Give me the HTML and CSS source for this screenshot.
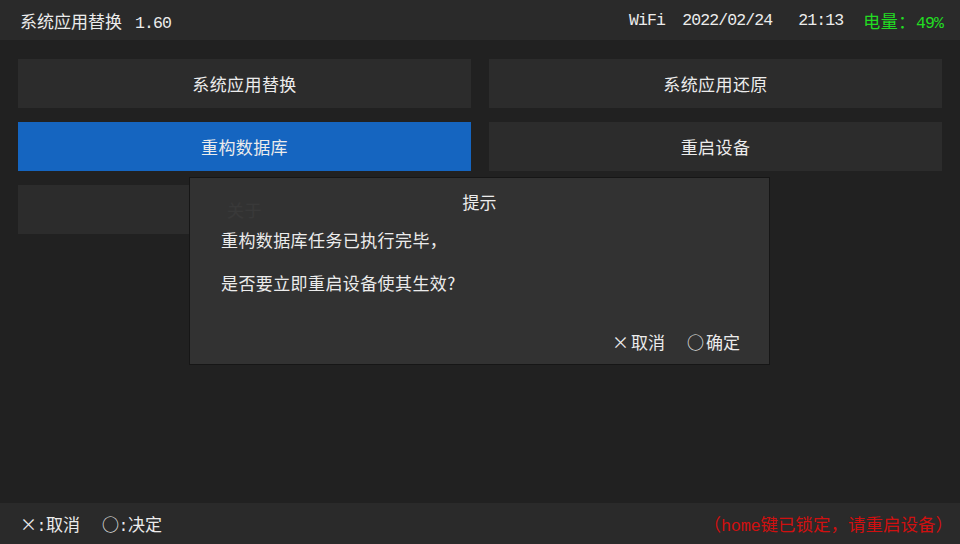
FILE: index.html
```html
<!DOCTYPE HTML>
<html>

<head>
    <meta charset="utf-8">
    <title>系统应用替换</title>
    <link rel="stylesheet" href="styles.css">
</head>

<body>
    <div class="screen">
        <div class="topbar">
            <span class="app-title">系统应用替换<span class="mono"> 1.60</span></span>
            <div class="status">
                <span class="mono wifi">WiFi</span>
                <span class="mono">2022/02/24</span>
                <span class="mono time">21:13</span>
                <span class="battery">电量：<span class="mono">49%</span></span>
            </div>
        </div>

        <div class="content">
            <div class="menu">
                <div class="item">系统应用替换</div>
                <div class="item">系统应用还原</div>
                <div class="item active">重构数据库</div>
                <div class="item">重启设备</div>
                <div class="item">关于</div>
            </div>

            <div class="dialog">
                <div class="dialog-title">提示</div>
                <div class="dialog-body">
                    <p>重构数据库任务已执行完毕，</p>
                    <p>是否要立即重启设备使其生效?</p>
                </div>
                <div class="dialog-actions">
                    <span><i class="key">×</i>取消</span>
                    <span><i class="key">○</i>确定</span>
                </div>
            </div>
        </div>

        <div class="bottombar">
            <div class="hints">
                <span><i class="key">×</i><span class="mono">:</span>取消</span>
                <span><i class="key">○</i><span class="mono">:</span>决定</span>
            </div>
            <span class="warn">（<span class="mono">home</span>键已锁定，请重启设备）</span>
        </div>
    </div>
</body>

</html>
```

FILE: styles.css
```css
html,
body {
    background: #212121;
    padding: 0;
    border: 0;
    margin: 0;
    height: 100%;
}

body {
    font-family: "Noto Sans CJK SC", "Noto Sans", sans-serif;
    color: #ececec;
    font-size: 17px;
}

.screen {
    width: 960px;
    height: 544px;
    display: flex;
    flex-direction: column;
    overflow: hidden;
}

/* 半角字符: 窄而高 */
.mono {
    font-family: "Liberation Mono", monospace;
    font-size: 16.5px;
    letter-spacing: -0.9px;
}

.key {
    font-style: normal;
    display: inline-block;
    width: 16px;
    text-align: center;
}

/* 顶部状态栏 */
.topbar {
    height: 40px;
    background: #2a2a2a;
    display: flex;
    align-items: center;
    justify-content: space-between;
    padding: 0 17px 0 20px;
    flex-shrink: 0;
}

.app-title {
    font-size: 17px;
}

.app-title .mono {
    margin-left: 4px;
}

.status {
    display: flex;
    align-items: center;
    gap: 20px;
}

.status .wifi {
    margin-right: -3px;
}

.status .time {
    margin-left: 6px;
}

.battery {
    color: #22dd22;
    letter-spacing: 0.6px;
}

/* 菜单 */
.content {
    flex: 1;
    position: relative;
    padding: 19px 18px 0 18px;
}

.menu {
    display: grid;
    grid-template-columns: 1fr 1fr;
    grid-auto-rows: 49px;
    gap: 14px 18px;
}

.item {
    background: #2c2c2c;
    display: flex;
    align-items: center;
    justify-content: center;
    letter-spacing: 0.4px;
}

.item.active {
    background: #1565c0;
}

/* 弹窗 */
.dialog {
    position: absolute;
    left: 189px;
    top: 137px;
    width: 579px;
    height: 186px;
    background: rgba(51, 51, 51, 0.97);
    border: 1px solid #161616;
    display: flex;
    flex-direction: column;
}

.dialog-title {
    text-align: center;
    padding-top: 12px;
    line-height: 24px;
}

.dialog-body {
    padding: 4px 30px 0 31px;
    letter-spacing: 0.4px;
}

.dialog-body p {
    margin: 0;
    line-height: 43px;
}

.dialog-actions {
    margin-top: auto;
    display: flex;
    justify-content: flex-end;
    gap: 22px;
    padding: 0 29px 10px 0;
    line-height: 24px;
}

.dialog-actions .key {
    width: auto;
    margin-right: 2px;
}

/* 底部提示栏 */
.bottombar {
    height: 41px;
    background: #2a2a2a;
    display: flex;
    align-items: center;
    justify-content: space-between;
    padding: 0 7px 0 20px;
    flex-shrink: 0;
}

.hints {
    display: flex;
    gap: 22px;
}

.hints .mono {
    display: inline-block;
    width: 10px;
    text-align: center;
}

.warn {
    color: #d01010;
    font-size: 17.5px;
}

.warn .mono {
    font-size: 17px;
    letter-spacing: -0.3px;
}
```
